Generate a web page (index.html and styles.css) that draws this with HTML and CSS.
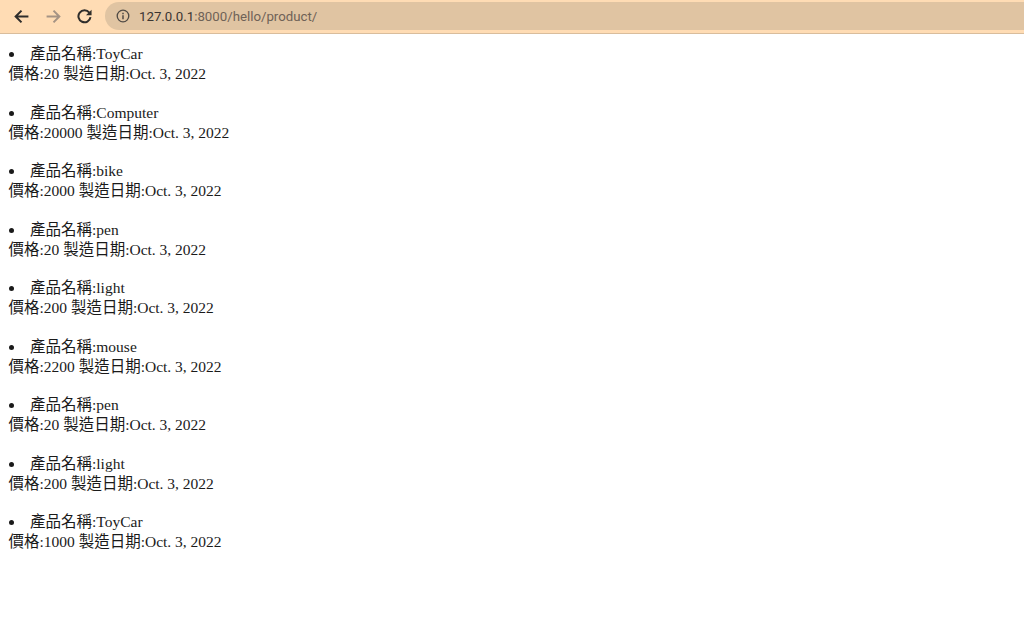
FILE: index.html
```html
<!DOCTYPE html>
<html lang="zh-Hant">
<head>
<meta charset="utf-8">
<title>product</title>
<link rel="stylesheet" href="styles.css">
</head>
<body>
<header class="toolbar">
  <nav class="nav-buttons">
    <svg class="icon" viewBox="0 0 16 16"><path class="stroke-dark" d="M14.5 8H2.5M8 2.5L2.5 8L8 13.5"/></svg>
    <svg class="icon" viewBox="0 0 16 16"><path class="stroke-faded" d="M1.5 8H13.5M8 2.5L13.5 8L8 13.5"/></svg>
    <svg class="icon" viewBox="0 0 16 16"><path class="stroke-dark" d="M11.6 4.3A5.7 5.7 0 1 0 12.7 8.6"/><path class="fill-dark" d="M13.7 1.6V6.8H8.5Z"/></svg>
  </nav>
  <div class="omnibox">
    <svg class="info" viewBox="0 0 14 14"><circle class="info-ring" cx="7" cy="7" r="5.8"/><path class="info-mark" d="M7 6.2V10.2M7 3.8V5.2"/></svg>
    <span class="url"><span class="host">127.0.0.1</span>:8000/hello/product/</span>
  </div>
</header>
<main class="content">
  <li class="item">產品名稱:ToyCar<br>價格:20 製造日期:Oct. 3, 2022</li>
  <li class="item">產品名稱:Computer<br>價格:20000 製造日期:Oct. 3, 2022</li>
  <li class="item">產品名稱:bike<br>價格:2000 製造日期:Oct. 3, 2022</li>
  <li class="item">產品名稱:pen<br>價格:20 製造日期:Oct. 3, 2022</li>
  <li class="item">產品名稱:light<br>價格:200 製造日期:Oct. 3, 2022</li>
  <li class="item">產品名稱:mouse<br>價格:2200 製造日期:Oct. 3, 2022</li>
  <li class="item">產品名稱:pen<br>價格:20 製造日期:Oct. 3, 2022</li>
  <li class="item">產品名稱:light<br>價格:200 製造日期:Oct. 3, 2022</li>
  <li class="item">產品名稱:ToyCar<br>價格:1000 製造日期:Oct. 3, 2022</li>
</main>
</body>
</html>
```
FILE: styles.css
```css
html, body {
  margin: 0;
  background: #fff;
}
body {
  font-family: "Liberation Serif", "Noto Sans CJK TC", serif;
  font-size: 15.5px;
  color: #1a1a1a;
}
.toolbar {
  display: flex;
  align-items: center;
  height: 33px;
  box-sizing: content-box;
  background: #ffdcb4;
  border-bottom: 1px solid #d9bd9c;
}
.nav-buttons {
  display: flex;
  align-items: center;
  gap: 15px;
  padding-left: 13px;
}
.icon {
  width: 17px;
  height: 17px;
  display: block;
}
.stroke-dark, .stroke-faded {
  fill: none;
  stroke-width: 1.9;
}
.stroke-dark { stroke: #2f2d2b; }
.stroke-faded { stroke: #a59384; }
.fill-dark { fill: #2f2d2b; }
.omnibox {
  display: flex;
  align-items: center;
  flex: 1;
  height: 28px;
  margin-left: 11px;
  margin-top: -1px;
  padding-left: 11px;
  background: #e0c4a2;
  border-radius: 14px 0 0 14px;
}
.info {
  width: 14px;
  height: 14px;
  margin-right: 9px;
}
.info-ring {
  fill: none;
  stroke: #4f4a45;
  stroke-width: 1.3;
}
.info-mark {
  fill: none;
  stroke: #4f4a45;
  stroke-width: 1.5;
}
.url {
  font-family: "Roboto", "Liberation Sans", sans-serif;
  font-size: 13.25px;
  color: #6f6257;
}
.host { color: #3a3532; }
.content {
  display: block;
  padding: 10px 8px 0 8.5px;
}
.item {
  line-height: 20px;
  margin-bottom: 18.5px;
  list-style-position: inside;
}
```
